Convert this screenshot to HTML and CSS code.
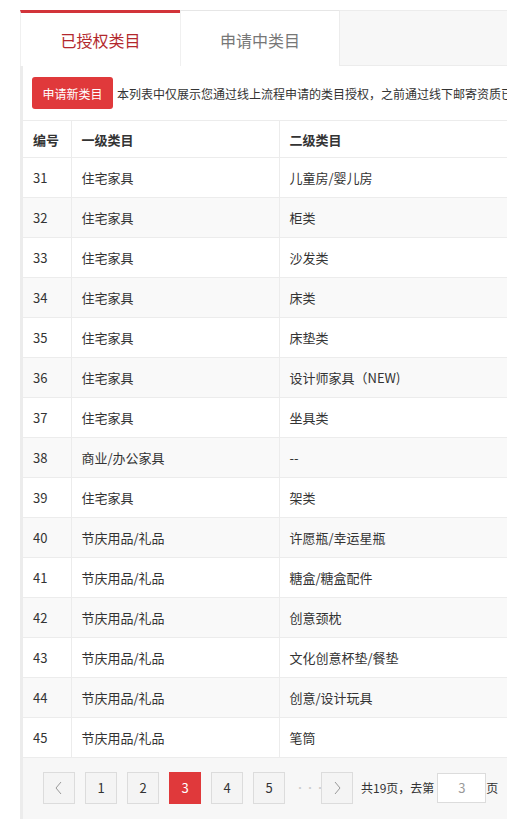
FILE: index.html
```html
<!DOCTYPE html>
<html lang="zh-CN">
<head>
<meta charset="utf-8">
<link rel="stylesheet" href="styles.css">
</head>
<body>
<div class="wrap">
  <div class="tabs">
    <div class="tab active">已授权类目</div>
    <div class="tab">申请中类目</div>
    <div class="tab-rest"></div>
  </div>
  <div class="panel">
    <div class="toolbar">
      <button class="btn-red">申请新类目</button>
      <span class="note">本列表中仅展示您通过线上流程申请的类目授权，之前通过线下邮寄资质已</span>
    </div>
    <table class="grid">
      <colgroup><col class="c1"><col class="c2"><col class="c3"></colgroup>
      <thead>
        <tr><th>编号</th><th>一级类目</th><th>二级类目</th></tr>
      </thead>
      <tbody>
        <tr><td>31</td><td>住宅家具</td><td>儿童房/婴儿房</td></tr>
        <tr><td>32</td><td>住宅家具</td><td>柜类</td></tr>
        <tr><td>33</td><td>住宅家具</td><td>沙发类</td></tr>
        <tr><td>34</td><td>住宅家具</td><td>床类</td></tr>
        <tr><td>35</td><td>住宅家具</td><td>床垫类</td></tr>
        <tr><td>36</td><td>住宅家具</td><td>设计师家具（NEW)</td></tr>
        <tr><td>37</td><td>住宅家具</td><td>坐具类</td></tr>
        <tr><td>38</td><td>商业/办公家具</td><td>--</td></tr>
        <tr><td>39</td><td>住宅家具</td><td>架类</td></tr>
        <tr><td>40</td><td>节庆用品/礼品</td><td>许愿瓶/幸运星瓶</td></tr>
        <tr><td>41</td><td>节庆用品/礼品</td><td>糖盒/糖盒配件</td></tr>
        <tr><td>42</td><td>节庆用品/礼品</td><td>创意颈枕</td></tr>
        <tr><td>43</td><td>节庆用品/礼品</td><td>文化创意杯垫/餐垫</td></tr>
        <tr><td>44</td><td>节庆用品/礼品</td><td>创意/设计玩具</td></tr>
        <tr><td>45</td><td>节庆用品/礼品</td><td>笔筒</td></tr>
      </tbody>
    </table>
    <div class="pager">
      <span class="pg"><svg width="10" height="14" viewBox="0 0 10 14"><path d="M7 1 L2 7 L7 13" fill="none" stroke="#999" stroke-width="1"/></svg></span>
      <span class="pg">1</span>
      <span class="pg">2</span>
      <span class="pg cur">3</span>
      <span class="pg">4</span>
      <span class="pg">5</span>
      <span class="dots">···</span>
      <span class="pg"><svg width="10" height="14" viewBox="0 0 10 14"><path d="M3 1 L8 7 L3 13" fill="none" stroke="#999" stroke-width="1"/></svg></span>
      <span class="total">共19页，去第</span>
      <span class="goto">3</span>
      <span class="total last">页</span>
    </div>
  </div>
</div>
</body>
</html>
```
FILE: styles.css
```css
html, body {
  margin: 0;
  padding: 0;
  background: #fff;
  overflow: hidden;
}
body {
  font-family: "Microsoft YaHei", "Noto Sans CJK SC", "Noto Sans", sans-serif;
  color: #333;
  font-size: 13px;
}
.wrap {
  margin: 10px 0 0 20px;
  width: 620px;
}
.tabs {
  display: flex;
  height: 56px;
}
.tab {
  width: 160px;
  box-sizing: border-box;
  display: flex;
  align-items: center;
  justify-content: center;
  font-size: 16px;
  color: #777;
  background: #fff;
  border-top: 1px solid #e6e6e6;
  border-right: 1px solid #ececec;
  border-left: 1px solid #f0f0f0;
  padding-top: 2px;
}
.tab.active {
  border-top: 3px solid #d2343a;
  color: #b3282d;
  border-left: 1px solid #f0f0f0;
  border-right: none;
  padding-top: 0;
}
.tab-rest {
  flex: 1;
  background: #f7f7f7;
  border-top: 1px solid #ececec;
  border-bottom: 1px solid #ececec;
}
.panel {
  border-left: 3px solid #ececec;
  background: #fff;
}
.toolbar {
  height: 54px;
  display: flex;
  align-items: center;
  padding-left: 9px;
  gap: 4px;
  white-space: nowrap;
  overflow: hidden;
}
.btn-red {
  flex-shrink: 0;
  width: 81px;
  height: 32px;
  border: none;
  border-radius: 3px;
  background: #e0393b;
  color: #fff;
  font-family: inherit;
  font-size: 12px;
  padding: 0;
}
.note {
  font-size: 12px;
  color: #333;
}
.grid {
  width: 100%;
  border-collapse: collapse;
  table-layout: fixed;
}
.c1 { width: 48px; }
.c2 { width: 208px; }
.grid th, .grid td {
  text-align: left;
  padding: 0 0 0 10px;
  border: 1px solid #ececec;
  border-left: none;
  font-size: 13px;
  color: #333;
  white-space: nowrap;
}
.grid th + th, .grid td + td {
  border-left: 1px solid #ececec;
}
.grid th {
  height: 36px;
  font-weight: 600;
}
.grid td {
  height: 39px;
}
.grid tbody tr:nth-child(even) td {
  background: #f9f9f9;
}
.pager {
  height: 61px;
  background: #f7f7f7;
  display: flex;
  align-items: center;
  padding-left: 20px;
  gap: 10px;
  padding-bottom: 2px;
  box-sizing: border-box;
}
.pg {
  flex-shrink: 0;
  width: 32px;
  height: 32px;
  box-sizing: border-box;
  border: 1px solid #dcdcdc;
  background: #f4f4f4;
  display: flex;
  align-items: center;
  justify-content: center;
  font-size: 13px;
  color: #333;
}
.pg.cur {
  background: #e0393b;
  border-color: #e0393b;
  color: #fff;
}
.dots {
  width: 16px;
  text-align: center;
  color: #ccc;
  font-size: 10px;
  letter-spacing: 0;
}
.total {
  font-size: 12px;
  color: #333;
  margin-left: -2px;
  white-space: nowrap;
}
.goto {
  flex-shrink: 0;
  width: 49px;
  height: 30px;
  box-sizing: border-box;
  border: 1px solid #dcdcdc;
  background: #fff;
  display: flex;
  align-items: center;
  justify-content: center;
  color: #999;
  font-size: 13px;
  margin-left: -7px;
  margin-right: -8px;
}
```
